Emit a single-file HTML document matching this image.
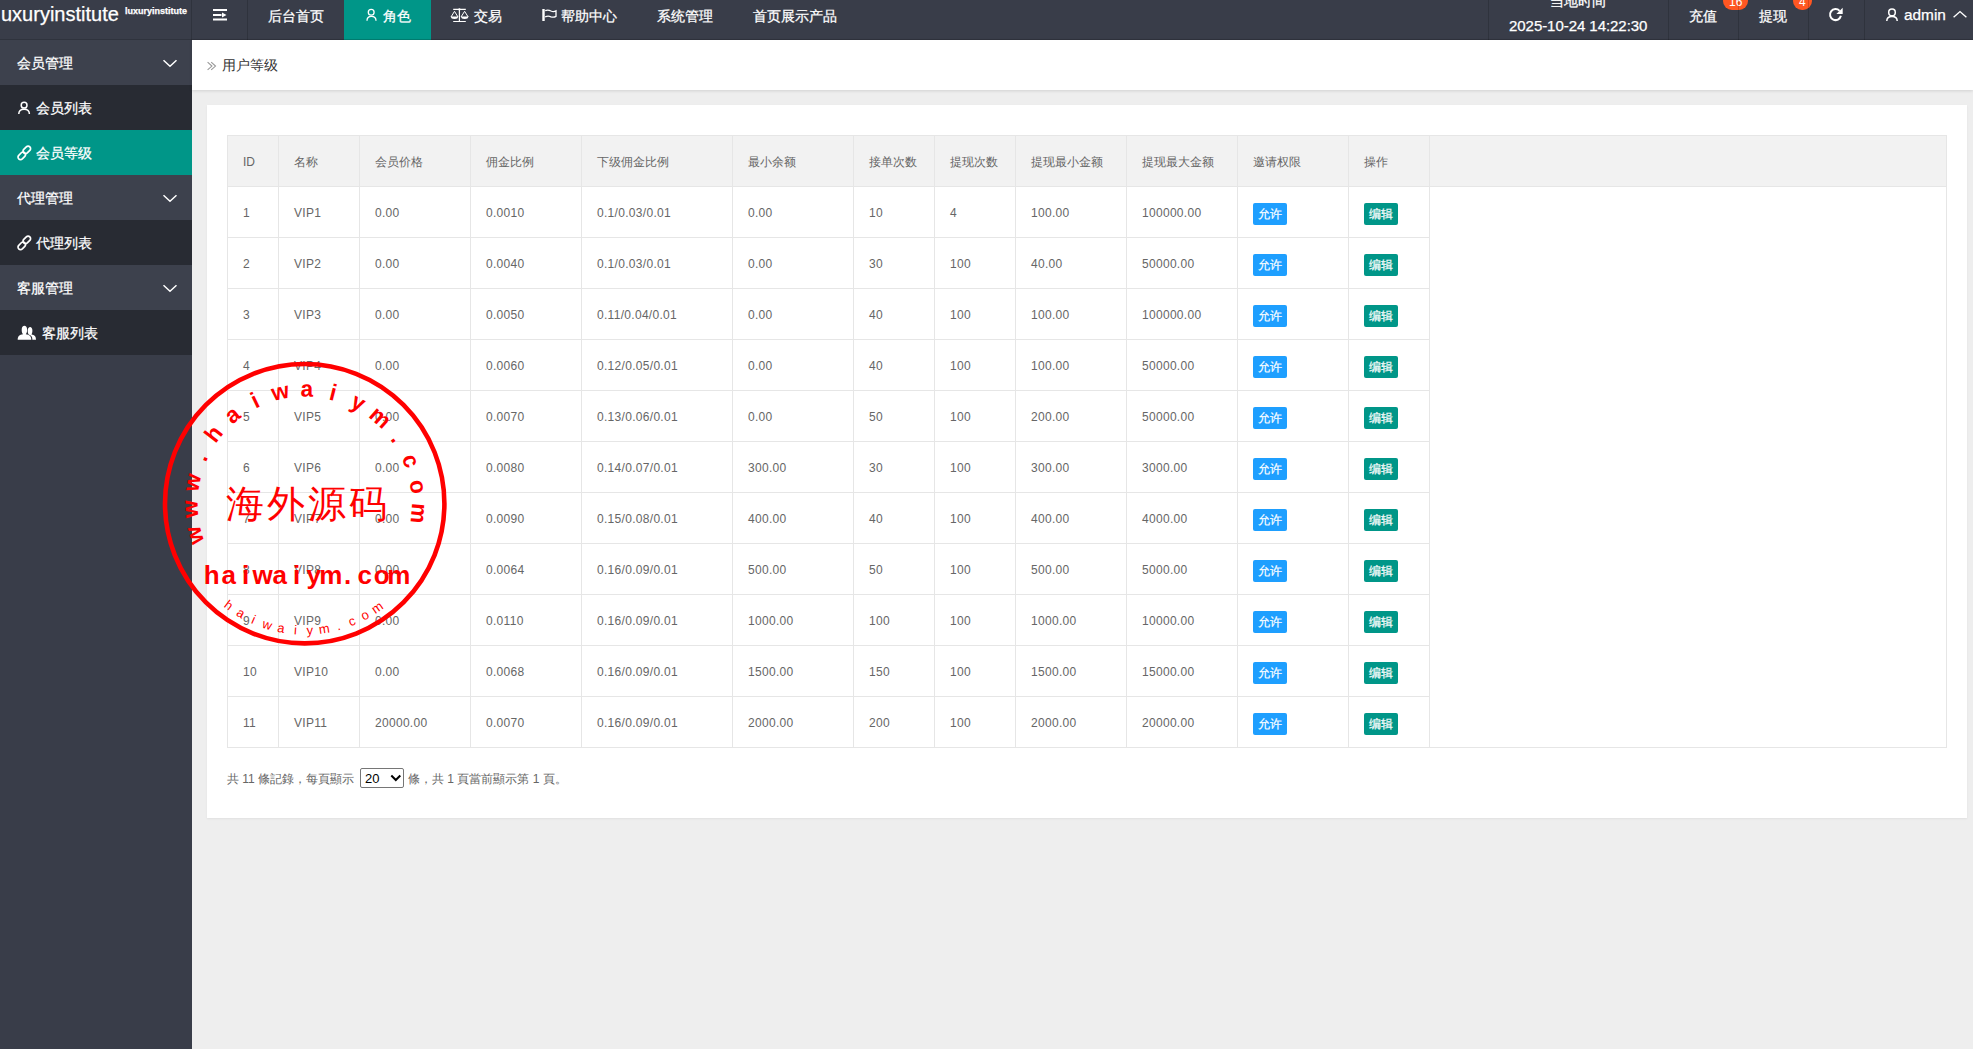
<!DOCTYPE html>
<html><head><meta charset="utf-8">
<style>
*{margin:0;padding:0;box-sizing:border-box}
html,body{width:1973px;height:1049px;overflow:hidden;background:#eeeeee;font-family:"Liberation Sans",sans-serif;}
.abs{position:absolute}
#hdr{position:absolute;left:0;top:0;width:1973px;height:40px;background:#393D49;color:#fff;font-size:14px;overflow:hidden}
.sep{position:absolute;top:0;width:1px;height:40px;background:rgba(0,0,0,.16);z-index:3}
.nt{position:absolute;top:0;line-height:32px;white-space:nowrap;color:#fff;font-size:14px;-webkit-text-stroke:0.25px #fff}
.badge{position:absolute;top:-8px;height:18px;line-height:20px;padding:0 6px;border-radius:9px;background:#FF5722;color:#fff;font-size:12px;z-index:2}
#side{position:absolute;left:0;top:40px;width:192px;height:1009px;background:#393D49}
.sr.p{background:#3D414D}
.sr{position:absolute;left:0;width:192px;height:45px;line-height:47px;color:#fff;font-size:14px;-webkit-text-stroke:0.25px #fff}
.sr.ch{background:#282B33}
.sr.on{background:#009688}
#crumb{position:absolute;left:192px;top:40px;width:1781px;height:50px;background:#fff;box-shadow:0 1px 3px rgba(0,0,0,.12)}
#card{position:absolute;left:207px;top:105px;width:1760px;height:713px;background:#fff;box-shadow:0 1px 2px rgba(0,0,0,.06)}
#tbl{position:absolute;left:227px;top:135px;width:1720px;height:613px;border:1px solid #e6e6e6;background:#fff}
#thead{position:absolute;left:0;top:0;width:1718px;height:51px;background:#f2f2f2;border-bottom:1px solid #e6e6e6}
table{border-collapse:collapse;position:absolute;left:-1px;top:-1px;table-layout:fixed}
td{border:1px solid #e6e6e6;height:51px;padding:2px 15px 0;font-size:12px;color:#666;white-space:nowrap;vertical-align:middle;overflow:hidden}
tr.r td{letter-spacing:0.3px}
.btn{letter-spacing:0;-webkit-text-stroke:0.2px #fff;display:inline-block;height:22px;line-height:22px;padding:0 5px;font-size:12px;color:#fff;border-radius:2px;position:relative;top:1px}
.b1{background:#1E9FFF}.b2{background:#009688}
svg{position:absolute;left:0;top:0;overflow:visible}
</style></head><body>
<div id="hdr">
  <div class="nt" style="left:1px;top:0px;font-size:20px;line-height:28px">uxuryinstitute</div>
  <div class="nt" style="left:125px;top:1px;font-size:9px;line-height:20px;font-weight:bold">luxuryinstitute</div>
  <div class="sep" style="left:191px"></div>
  <div class="sep" style="left:247px"></div>
  <div class="nt" style="left:268px">后台首页</div>
  <div class="abs" style="left:344px;top:0;width:87px;height:40px;background:#009688"></div>
  <div class="nt" style="left:383px">角色</div>
  <div class="nt" style="left:474px">交易</div>
  <div class="nt" style="left:561px">帮助中心</div>
  <div class="nt" style="left:657px">系统管理</div>
  <div class="nt" style="left:753px">首页展示产品</div>
  <div class="sep" style="left:1488px"></div>
  <div class="nt" style="left:1550px;top:-15px">当地时间</div>
  <div class="nt" style="left:1509px;top:16.5px;line-height:17px;font-size:15px;letter-spacing:-0.05px">2025-10-24 14:22:30</div>
  <div class="sep" style="left:1668px"></div>
  <div class="nt" style="left:1689px">充值</div>
  <div class="badge" style="left:1723px">16</div>
  <div class="sep" style="left:1738px"></div>
  <div class="nt" style="left:1759px">提现</div>
  <div class="badge" style="left:1793px">4</div>
  <div class="sep" style="left:1808px"></div>
  <div class="sep" style="left:1864px"></div>
  <div class="nt" style="left:1904px;font-size:15.4px;line-height:29px">admin</div>
  <div class="abs" style="left:0;top:39px;width:1973px;height:1px;background:rgba(0,0,0,.16);z-index:4"></div>
  <svg width="1973" height="40" fill="none" stroke="#fff">
    <!-- shrink icon -->
    <rect x="213" y="9" width="14" height="2" fill="#fff" stroke="none"/>
    <rect x="213" y="14" width="8.5" height="2" fill="#fff" stroke="none"/>
    <rect x="213" y="18.5" width="14" height="2" fill="#fff" stroke="none"/>
    <path d="M222,12.5 L226.5,15 L222,17.5 Z" fill="#fff" stroke="none"/>
    <!-- user icon 角色 -->
    <circle cx="371.2" cy="12.2" r="2.9" stroke-width="1.3"/>
    <path d="M367,20.8 C367,17.8 368.9,16.4 371.4,16.4 C373.9,16.4 376,17.8 376,20.8" stroke-width="1.3"/>
    <!-- balance -->
    <path d="M453.2,9.45 H465.8 M459.4,9.4 V21.5 M453.2,21.5 H465.8" stroke-width="1.2"/>
    <circle cx="459.4" cy="9.45" r="1.1" fill="#fff" stroke="none"/>
    <path d="M451,17 L454.5,11.3 L458,17 M461,17 L464.6,11.3 L468.2,17" stroke-width="1"/>
    <path d="M450.8,16.6 H458.2 Q458,19.1 454.5,19.1 Q451,19.1 450.8,16.6 Z M461,16.6 H468.4 Q468.2,19.1 464.7,19.1 Q461.2,19.1 461,16.6 Z" fill="#fff" stroke="none"/>
    <!-- flag -->
    <rect x="542.3" y="9" width="2.4" height="12" fill="#fff" stroke="none"/>
    <path d="M545.2,10.6 C547.5,9.6 549.5,10.2 551,11 C552.6,11.8 554.6,11.6 556,10.8 V16.4 C554.6,17.2 552.6,17.4 551,16.8 C549.5,16.1 547.5,15.8 545.2,16.8" stroke-width="1.3"/>
    <!-- refresh -->
    <path d="M1840.9,15.8 A5.5,5.5 0 1 1 1839.6,10.9" stroke-width="2"/>
    <path d="M1836.4,13.9 L1842.7,7.7 L1842.7,13.9 Z" fill="#fff" stroke="none"/>
    <!-- admin user -->
    <circle cx="1892" cy="12.4" r="3.3" stroke-width="1.5"/>
    <path d="M1886.8,20.9 C1886.8,17.9 1889,16.5 1892,16.5 C1895,16.5 1897.2,17.9 1897.2,20.9" stroke-width="1.5"/>
    <!-- up chevron -->
    <path d="M1953.6,17.3 L1960,11.6 L1966.4,17.3" stroke-width="1.4"/>
  </svg>
</div>
<div id="side">
  <div class="sr p" style="top:0"><span style="margin-left:17px">会员管理</span></div>
  <div class="sr ch" style="top:45px"><span style="margin-left:36px">会员列表</span></div>
  <div class="sr on" style="top:90px"><span style="margin-left:36px">会员等级</span></div>
  <div class="sr p" style="top:135px"><span style="margin-left:17px">代理管理</span></div>
  <div class="sr ch" style="top:180px"><span style="margin-left:36px">代理列表</span></div>
  <div class="sr p" style="top:225px"><span style="margin-left:17px">客服管理</span></div>
  <div class="sr ch" style="top:270px"><span style="margin-left:42px">客服列表</span></div>
  <svg width="192" height="400" fill="none" stroke="#fff">
    <path d="M163.5,20.2 L170,26.3 L176.5,20.2 M163.5,155.2 L170,161.3 L176.5,155.2 M163.5,245.2 L170,251.3 L176.5,245.2" stroke-width="1.5"/>
    <!-- person -->
    <circle cx="24.1" cy="65.2" r="2.9" stroke-width="1.5"/>
    <path d="M18.8,74.1 C18.8,71 21,69.2 24.1,69.2 C27.2,69.2 29.4,71 29.4,74.1" stroke-width="1.5"/>
    <!-- links -->
    <g stroke-width="1.7">
      <rect x="-2.5" y="-4.3" width="5" height="8.6" rx="2.5" transform="translate(21.8,115.8) rotate(45)"/>
      <rect x="-2.5" y="-4.3" width="5" height="8.6" rx="2.5" transform="translate(26.8,109.9) rotate(45)"/>
    </g>
    <g stroke-width="1.7">
      <rect x="-2.5" y="-4.3" width="5" height="8.6" rx="2.5" transform="translate(21.8,205.8) rotate(45)"/>
      <rect x="-2.5" y="-4.3" width="5" height="8.6" rx="2.5" transform="translate(26.8,199.9) rotate(45)"/>
    </g>
    <!-- users -->
    <path d="M17.7,299.8 C17.7,296 19.5,294.6 23,294.2 C21.6,292.6 21.6,290.5 21.8,288.5 C22.2,286.5 23,285.7 24.4,285.7 C25.8,285.7 26.6,286.5 27,288.5 C27.2,290.5 27.2,292.6 25.8,294.2 C29.3,294.6 31.3,296 31.3,299.8 Z" fill="#fff" stroke="none"/>
    <path d="M28.6,294.4 C27.7,293 27.6,291.2 27.8,289.6 C28.1,287.8 29,286.9 30.1,286.9 C31.3,286.9 32,287.8 32.3,289.6 C32.5,291.2 32.4,293 31.5,294.4 C34.6,294.8 36,296.2 36,299.8 H32.4 C32.4,296.5 31.2,295.1 28.6,294.4 Z" fill="#fff" stroke="none"/>
  </svg>
</div>
<div id="crumb">
  <svg width="40" height="50" fill="none" stroke="#999" stroke-width="1.1">
    <path d="M15.6,22.2 L19.9,26.1 L15.6,29.9 M19.2,22.2 L23.5,26.1 L19.2,29.9"/>
  </svg>
  <div class="abs" style="left:30px;top:0;line-height:50px;font-size:14px;color:#333">用户等级</div>
</div>
<div id="card"></div>
<div id="tbl">
  <div id="thead"></div>
  <table id="t"><colgroup><col style="width:51px"><col style="width:81px"><col style="width:111px"><col style="width:111px"><col style="width:151px"><col style="width:121px"><col style="width:81px"><col style="width:81px"><col style="width:111px"><col style="width:111px"><col style="width:111px"><col style="width:81px"></colgroup>
<tr class="th"><td>ID</td><td>名称</td><td>会员价格</td><td>佣金比例</td><td>下级佣金比例</td><td>最小余额</td><td>接单次数</td><td>提现次数</td><td>提现最小金额</td><td>提现最大金额</td><td>邀请权限</td><td>操作</td></tr>
<tr class="r"><td>1</td><td>VIP1</td><td>0.00</td><td>0.0010</td><td>0.1/0.03/0.01</td><td>0.00</td><td>10</td><td>4</td><td>100.00</td><td>100000.00</td><td><span class="btn b1">允许</span></td><td><span class="btn b2">编辑</span></td></tr>
<tr class="r"><td>2</td><td>VIP2</td><td>0.00</td><td>0.0040</td><td>0.1/0.03/0.01</td><td>0.00</td><td>30</td><td>100</td><td>40.00</td><td>50000.00</td><td><span class="btn b1">允许</span></td><td><span class="btn b2">编辑</span></td></tr>
<tr class="r"><td>3</td><td>VIP3</td><td>0.00</td><td>0.0050</td><td>0.11/0.04/0.01</td><td>0.00</td><td>40</td><td>100</td><td>100.00</td><td>100000.00</td><td><span class="btn b1">允许</span></td><td><span class="btn b2">编辑</span></td></tr>
<tr class="r"><td>4</td><td>VIP4</td><td>0.00</td><td>0.0060</td><td>0.12/0.05/0.01</td><td>0.00</td><td>40</td><td>100</td><td>100.00</td><td>50000.00</td><td><span class="btn b1">允许</span></td><td><span class="btn b2">编辑</span></td></tr>
<tr class="r"><td>5</td><td>VIP5</td><td>0.00</td><td>0.0070</td><td>0.13/0.06/0.01</td><td>0.00</td><td>50</td><td>100</td><td>200.00</td><td>50000.00</td><td><span class="btn b1">允许</span></td><td><span class="btn b2">编辑</span></td></tr>
<tr class="r"><td>6</td><td>VIP6</td><td>0.00</td><td>0.0080</td><td>0.14/0.07/0.01</td><td>300.00</td><td>30</td><td>100</td><td>300.00</td><td>3000.00</td><td><span class="btn b1">允许</span></td><td><span class="btn b2">编辑</span></td></tr>
<tr class="r"><td>7</td><td>VIP7</td><td>0.00</td><td>0.0090</td><td>0.15/0.08/0.01</td><td>400.00</td><td>40</td><td>100</td><td>400.00</td><td>4000.00</td><td><span class="btn b1">允许</span></td><td><span class="btn b2">编辑</span></td></tr>
<tr class="r"><td>8</td><td>VIP8</td><td>0.00</td><td>0.0064</td><td>0.16/0.09/0.01</td><td>500.00</td><td>50</td><td>100</td><td>500.00</td><td>5000.00</td><td><span class="btn b1">允许</span></td><td><span class="btn b2">编辑</span></td></tr>
<tr class="r"><td>9</td><td>VIP9</td><td>0.00</td><td>0.0110</td><td>0.16/0.09/0.01</td><td>1000.00</td><td>100</td><td>100</td><td>1000.00</td><td>10000.00</td><td><span class="btn b1">允许</span></td><td><span class="btn b2">编辑</span></td></tr>
<tr class="r"><td>10</td><td>VIP10</td><td>0.00</td><td>0.0068</td><td>0.16/0.09/0.01</td><td>1500.00</td><td>150</td><td>100</td><td>1500.00</td><td>15000.00</td><td><span class="btn b1">允许</span></td><td><span class="btn b2">编辑</span></td></tr>
<tr class="r"><td>11</td><td>VIP11</td><td>20000.00</td><td>0.0070</td><td>0.16/0.09/0.01</td><td>2000.00</td><td>200</td><td>100</td><td>2000.00</td><td>20000.00</td><td><span class="btn b1">允许</span></td><td><span class="btn b2">编辑</span></td></tr></table>
</div>
<div class="abs" style="left:227px;top:769px;font-size:12px;color:#666;line-height:20px;white-space:nowrap">共 11 條記錄，每頁顯示</div>
<div class="abs" style="left:360px;top:768px;width:44px;height:20px;border:1px solid #767676;border-radius:2px;color:#000;font-size:13px;padding-left:4px;line-height:20px;background:#fff">20<svg width="44" height="20" fill="none" stroke="#000" stroke-width="2"><path d="M30.3,6.5 L34.8,11 L39.3,6.5"/></svg></div>
<div class="abs" style="left:408px;top:769px;font-size:12px;color:#666;line-height:20px;white-space:nowrap">條，共 1 頁當前顯示第 1 頁。</div>
<!-- watermark -->
<svg id="wm" width="1973" height="1049" style="z-index:10">
  <circle cx="304.7" cy="503.7" r="139.7" fill="none" stroke="#f00" stroke-width="4.6"/><g fill="#f00" font-family="Liberation Sans" font-weight="bold" font-size="23" text-anchor="middle"><text x="0" y="0" transform="translate(201.9,533.4) rotate(253.9) scale(0.98,1)">w</text><text x="0" y="0" transform="translate(197.8,508.8) rotate(267.3) scale(0.98,1)">w</text><text x="0" y="0" transform="translate(199.6,483.9) rotate(280.7) scale(0.98,1)">w</text><text x="0" y="0" transform="translate(207.0,460.0) rotate(294.1) scale(0.98,1)">.</text><text x="0" y="0" transform="translate(219.8,438.6) rotate(307.5) scale(0.98,1)">h</text><text x="0" y="0" transform="translate(237.2,420.7) rotate(320.9) scale(0.98,1)">a</text><text x="0" y="0" transform="translate(258.2,407.3) rotate(334.3) scale(0.98,1)">i</text><text x="0" y="0" transform="translate(281.8,399.2) rotate(347.7) scale(0.98,1)">w</text><text x="0" y="0" transform="translate(306.7,396.7) rotate(361.0) scale(0.98,1)">a</text><text x="0" y="0" transform="translate(331.4,400.1) rotate(374.4) scale(0.98,1)">i</text><text x="0" y="0" transform="translate(354.7,409.1) rotate(387.8) scale(0.98,1)">y</text><text x="0" y="0" transform="translate(375.2,423.2) rotate(401.2) scale(0.98,1)">m</text><text x="0" y="0" transform="translate(391.9,441.7) rotate(414.6) scale(0.98,1)">.</text><text x="0" y="0" transform="translate(403.9,463.6) rotate(428.0) scale(0.98,1)">c</text><text x="0" y="0" transform="translate(410.5,487.7) rotate(441.4) scale(0.98,1)">o</text><text x="0" y="0" transform="translate(411.3,512.7) rotate(454.8) scale(0.98,1)">m</text></g><g fill="#f00" font-family="Liberation Sans" font-size="13" text-anchor="middle"><text x="0" y="0" transform="translate(226.2,608.6) rotate(36.8)">h</text><text x="0" y="0" transform="translate(238.6,616.8) rotate(30.3)">a</text><text x="0" y="0" transform="translate(251.9,623.6) rotate(23.8)">i</text><text x="0" y="0" transform="translate(265.9,628.8) rotate(17.2)">w</text><text x="0" y="0" transform="translate(280.3,632.4) rotate(10.7)">a</text><text x="0" y="0" transform="translate(295.1,634.3) rotate(4.2)">i</text><text x="0" y="0" transform="translate(310.0,634.6) rotate(-2.3)">y</text><text x="0" y="0" transform="translate(324.8,633.1) rotate(-8.8)">m</text><text x="0" y="0" transform="translate(339.4,630.0) rotate(-15.3)">.</text><text x="0" y="0" transform="translate(353.5,625.3) rotate(-21.9)">c</text><text x="0" y="0" transform="translate(367.0,619.0) rotate(-28.4)">o</text><text x="0" y="0" transform="translate(379.7,611.1) rotate(-34.9)">m</text></g><text x="226" y="517" fill="#f00" font-family="Liberation Sans" font-size="38" letter-spacing="3">海外源码</text><text x="211.7 228.7 245.7 262.7 279.7 296.7 313.7 330.7 347.7 364.7 381.7 398.7" y="584" fill="#f00" font-family="Liberation Sans" font-size="26" font-weight="bold" text-anchor="middle">haiwaiym.com</text>
</svg>
</body></html>
